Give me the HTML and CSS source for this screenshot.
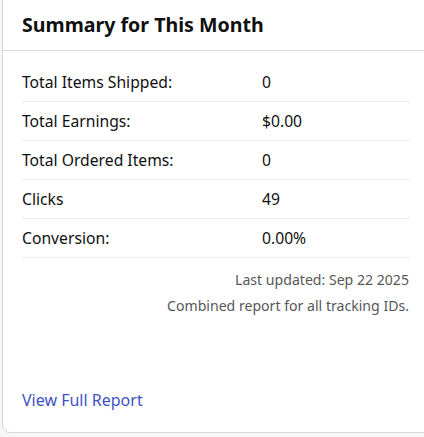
FILE: index.html
```html
<!DOCTYPE html>
<html>
<head>
<meta charset="utf-8">
<link rel="stylesheet" href="styles.css">
</head>
<body>
<div class="card">
  <div class="card-header">
    <h2 class="title">Summary for This Month</h2>
  </div>
  <div class="card-body">
    <div class="rows">
      <div class="row"><span class="label">Total Items Shipped:</span><span class="value">0</span></div>
      <div class="row"><span class="label">Total Earnings:</span><span class="value">$0.00</span></div>
      <div class="row"><span class="label">Total Ordered Items:</span><span class="value">0</span></div>
      <div class="row"><span class="label">Clicks</span><span class="value">49</span></div>
      <div class="row"><span class="label">Conversion:</span><span class="value">0.00%</span></div>
    </div>
    <div class="meta">
      <p class="meta-line">Last updated: Sep 22 2025</p>
      <p class="meta-line">Combined report for all tracking IDs.</p>
    </div>
  </div>
  <div class="card-footer">
    <a class="link" href="#">View Full Report</a>
  </div>
</div>
</body>
</html>
```

FILE: styles.css
```css
html, body {
  margin: 0;
  padding: 0;
  background: #f7f7f7;
  overflow: hidden;
}
body {
  font-family: "Noto Sans", "Open Sans", Arial, sans-serif;
  color: #0f1111;
  width: 424px;
  height: 437px;
}
.card {
  margin-left: 2px;
  margin-top: -10px;
  width: 440px;
  height: 443px;
  box-sizing: border-box;
  background: #fff;
  border: 1px solid #d5d9d9;
  border-radius: 8px;
  display: flex;
  flex-direction: column;
}
.card-header {
  height: 60px;
  box-sizing: border-box;
  border-bottom: 1px solid #d5d9d9;
  padding: 9px 19px 0;
  display: flex;
  align-items: center;
}
.title {
  margin: 0;
  font-size: 19.6px;
  font-weight: 700;
  line-height: 24px;
}
.card-body {
  padding: 12px 31px 0 19px;
}
.rows {
  display: flex;
  flex-direction: column;
}
.row {
  display: flex;
  align-items: center;
  height: 38px;
  border-bottom: 1px solid #eaeded;
  font-size: 15.7px;
}
.label {
  width: 240px;
}
.value {
  flex: 1;
}
.meta {
  padding-top: 9px;
  padding-right: 1px;
  text-align: right;
  color: #565959;
  font-size: 14.1px;
}
.meta-line {
  margin: 0;
  line-height: 26px;
}
.card-footer {
  margin-top: auto;
  padding: 0 19px 21px;
}
.link {
  color: #3f51c8;
  text-decoration: none;
  font-size: 16px;
}
```
